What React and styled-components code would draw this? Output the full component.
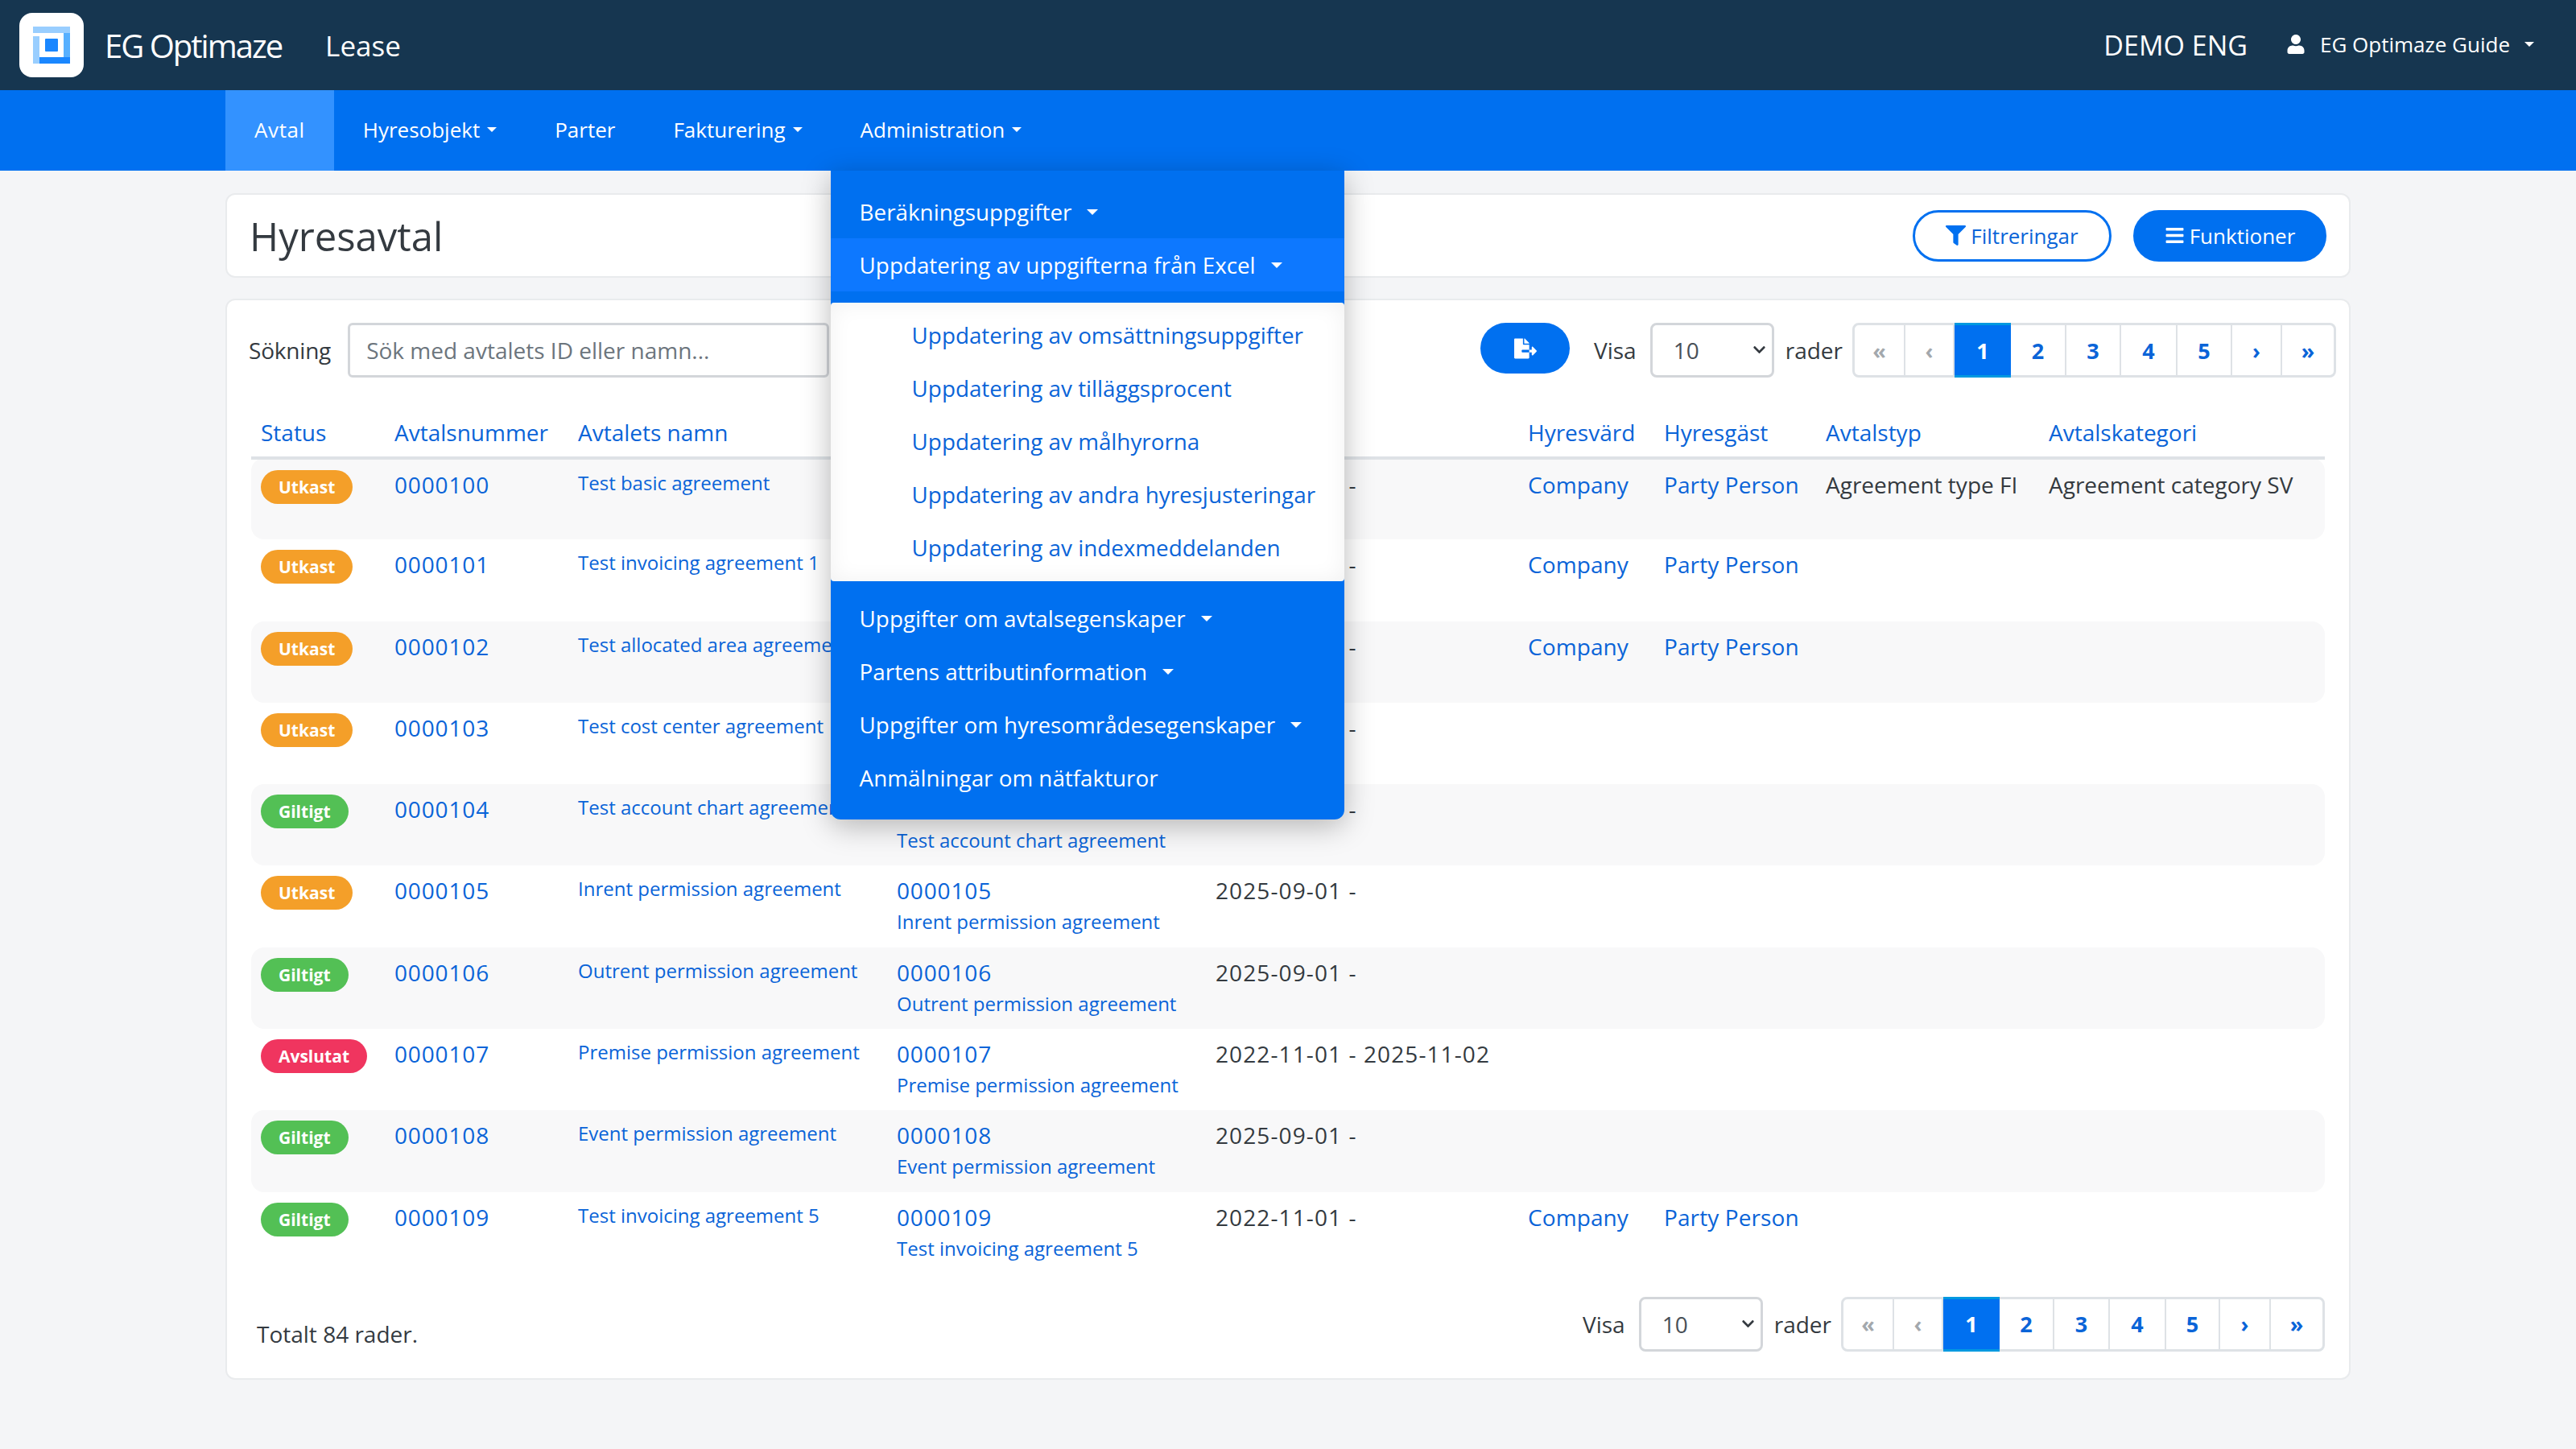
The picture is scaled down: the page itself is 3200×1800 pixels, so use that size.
import React from 'react';
import styled, { createGlobalStyle } from 'styled-components';
import { FaUser, FaFilter, FaBars, FaFileExport, FaChevronDown } from 'react-icons/fa';

const GlobalStyle = createGlobalStyle`
  html, body {
    margin: 0;
    padding: 0;
    background: #f4f5f7;
    font-family: "Open Sans", "Liberation Sans", sans-serif;
    font-size: 28px;
    color: #343a40;
  }
  * { box-sizing: border-box; }
`;

const rows = [
  { status: 'Utkast', name: 'Test basic agreement', date: '2025-09-01 -', lord: true, tenant: true, type: 'Agreement type FI', cat: 'Agreement category SV' },
  { status: 'Utkast', name: 'Test invoicing agreement 1', date: '2025-09-01 -', lord: true, tenant: true },
  { status: 'Utkast', name: 'Test allocated area agreement', date: '2025-09-01 -', lord: true, tenant: true },
  { status: 'Utkast', name: 'Test cost center agreement', date: '2025-09-01 -' },
  { status: 'Giltigt', name: 'Test account chart agreement', date: '2025-09-01 -' },
  { status: 'Utkast', name: 'Inrent permission agreement', date: '2025-09-01 -' },
  { status: 'Giltigt', name: 'Outrent permission agreement', date: '2025-09-01 -' },
  { status: 'Avslutat', name: 'Premise permission agreement', date: '2022-11-01 - 2025-11-02' },
  { status: 'Giltigt', name: 'Event permission agreement', date: '2025-09-01 -' },
  { status: 'Giltigt', name: 'Test invoicing agreement 5', date: '2022-11-01 -', lord: true, tenant: true },
];

const columns = [
  ['Status', 166],
  ['Avtalsnummer', 228],
  ['Avtalets namn', 396],
  ['', 396],
  ['', 388],
  ['Hyresvärd', 169],
  ['Hyresgäst', 201],
  ['Avtalstyp', 277],
  ['Avtalskategori', 355],
];

const pagesTop = [63, 61, 70, 69, 68, 70, 68, 62, 64];
const pagesBottom = [63, 61, 70, 68, 69, 70, 67, 63, 64];
const pageLabels = ['«', '‹', '1', '2', '3', '4', '5', '›', '»'];

const menuTop = ['Beräkningsuppgifter', 'Uppdatering av uppgifterna från Excel'];
const subMenu = [
  'Uppdatering av omsättningsuppgifter',
  'Uppdatering av tilläggsprocent',
  'Uppdatering av målhyrorna',
  'Uppdatering av andra hyresjusteringar',
  'Uppdatering av indexmeddelanden',
];
const menuBottom = [
  ['Uppgifter om avtalsegenskaper', true],
  ['Partens attributinformation', true],
  ['Uppgifter om hyresområdesegenskaper', true],
  ['Anmälningar om nätfakturor', false],
];

const Pager = ({ widths }) => (
  <Pagination>
    {pageLabels.map((label, i) => (
      <PageCell key={label} $w={widths[i]} $active={i === 2} $disabled={i < 2}>
        {label}
      </PageCell>
    ))}
  </Pagination>
);

const RowsSelect = () => (
  <ShowGroup>
    <span>Visa</span>
    <SelectWrap>
      <Select defaultValue="10">
        <option value="10">10</option>
        <option value="25">25</option>
      </Select>
      <SelectArrow><FaChevronDown size={17} /></SelectArrow>
    </SelectWrap>
    <span>rader</span>
  </ShowGroup>
);

const App = () => {
  return (
    <Page>
      <GlobalStyle />
      <Header>
        <Brand>
          <LogoBox>
            <svg width="80" height="80" viewBox="0 0 80 80">
              <rect x="17" y="17" width="46" height="8" fill="#99ceff" />
              <rect x="17" y="29" width="8" height="34" fill="#99ceff" />
              <rect x="55" y="25" width="8" height="30" fill="#57b0ff" />
              <rect x="25" y="55" width="38" height="8" fill="#1a87ff" />
              <rect x="32" y="32" width="16" height="16" rx="1" fill="#1a87ff" />
            </svg>
          </LogoBox>
          <BrandName>EG Optimaze</BrandName>
          <Product>Lease</Product>
        </Brand>
        <HeaderRight>
          <Tenant>DEMO ENG</Tenant>
          <UserMenu>
            <FaUser size={24} />
            <span>EG Optimaze Guide</span>
            <Caret $size={6} />
          </UserMenu>
        </HeaderRight>
      </Header>

      <Nav>
        <NavItem $active>Avtal</NavItem>
        <NavItem>Hyresobjekt<Caret $size={6} /></NavItem>
        <NavItem>Parter</NavItem>
        <NavItem>Fakturering<Caret $size={6} /></NavItem>
        <NavMenuWrap>
          <NavItem>Administration<Caret $size={6} /></NavItem>
          <Dropdown>
            <DropdownGroup>
              {menuTop.map((m, i) => (
                <DropItem key={m} $active={i === 1}>{m}<Caret $size={7} $gap={19} /></DropItem>
              ))}
            </DropdownGroup>
            <SubMenu>
              {subMenu.map((m) => (
                <SubItem key={m}>{m}</SubItem>
              ))}
            </SubMenu>
            <DropdownGroup $bottom>
              {menuBottom.map(([m, caret]) => (
                <DropItem key={m}>{m}{caret && <Caret $size={7} $gap={19} />}</DropItem>
              ))}
            </DropdownGroup>
          </Dropdown>
        </NavMenuWrap>
      </Nav>

      <Main>
        <TitleCard>
          <Title>Hyresavtal</Title>
          <TitleActions>
            <PillButton $w={247}><FaFilter size={25} />Filtreringar</PillButton>
            <PillButton $w={240} $solid><FaBars size={25} />Funktioner</PillButton>
          </TitleActions>
        </TitleCard>

        <ListCard>
          <Toolbar>
            <SearchGroup>
              <span>Sökning</span>
              <SearchInput placeholder="Sök med avtalets ID eller namn..." />
            </SearchGroup>
            <ToolbarRight>
              <ExportButton><FaFileExport size={28} /></ExportButton>
              <RowsSelect />
              <Pager widths={pagesTop} />
            </ToolbarRight>
          </Toolbar>

          <Table>
            <colgroup>
              {columns.map(([label, w], i) => (
                <Col key={i} $w={w} />
              ))}
            </colgroup>
            <thead>
              <tr>
                {columns.map(([label], i) => (
                  <Th key={i}>{label}</Th>
                ))}
              </tr>
            </thead>
            <tbody>
              {rows.map((r, i) => {
                const id = String(100 + i).padStart(7, '0');
                return (
                  <Tr key={id} $striped={i % 2 === 0}>
                    <Td><Badge $status={r.status}>{r.status}</Badge></Td>
                    <Td><Link $num>{id}</Link></Td>
                    <Td><SmallLink>{r.name}</SmallLink></Td>
                    <Td>
                      <Link $num>{id}</Link>
                      <SubLine>{r.name}</SubLine>
                    </Td>
                    <DateCell>{r.date}</DateCell>
                    <Td>{r.lord && <Link>Company</Link>}</Td>
                    <Td>{r.tenant && <Link>Party Person</Link>}</Td>
                    <Td>{r.type}</Td>
                    <Td>{r.cat}</Td>
                  </Tr>
                );
              })}
            </tbody>
          </Table>

          <Footer>
            <Total>Totalt 84 rader.</Total>
            <FooterRight>
              <RowsSelect />
              <Pager widths={pagesBottom} />
            </FooterRight>
          </Footer>
        </ListCard>
      </Main>
    </Page>
  );
};

export default App;

const Page = styled.div`
  width: 3200px;
  height: 1800px;
  overflow: hidden;
`;

const Header = styled.header`
  height: 112px;
  background: #163650;
  color: #fff;
  display: flex;
  align-items: center;
  justify-content: space-between;
  padding: 0 52px 0 24px;
`;

const Brand = styled.div`
  display: flex;
  align-items: center;
`;

const LogoBox = styled.div`
  width: 80px;
  height: 80px;
  background: #fff;
  border-radius: 16px;
  margin-right: 26px;
`;

const BrandName = styled.div`
  font-size: 40px;
  font-weight: 500;
  letter-spacing: -2px;
  margin-right: 54px;
`;

const Product = styled.div`
  font-size: 35px;
`;

const HeaderRight = styled.div`
  display: flex;
  align-items: center;
`;

const Tenant = styled.div`
  font-size: 34px;
  margin-right: 48px;
`;

const UserMenu = styled.div`
  display: flex;
  align-items: center;
  font-size: 26px;
  gap: 18px;
  padding-bottom: 2px;
`;

const Caret = styled.i`
  display: inline-block;
  width: 0;
  height: 0;
  margin-left: ${(p) => p.$gap ?? 0}px;
  border-top: ${(p) => p.$size}px solid currentColor;
  border-left: ${(p) => p.$size}px solid transparent;
  border-right: ${(p) => p.$size}px solid transparent;
`;

const Nav = styled.nav`
  height: 100px;
  background: #0070f0;
  color: #fff;
  display: flex;
  padding-left: 280px;
  font-size: 26px;
`;

const NavItem = styled.div`
  height: 100px;
  padding: 0 36px 3px;
  display: flex;
  align-items: center;
  gap: 9px;
  letter-spacing: ${(p) => (p.$active ? '0.6px' : '0')};
  background: ${(p) => (p.$active ? '#3392ff' : 'transparent')};
`;

const NavMenuWrap = styled.div`
  position: relative;
`;

const Dropdown = styled.div`
  position: absolute;
  z-index: 10;
  top: 100px;
  left: -1px;
  width: 638px;
  height: 806px;
  background: #0070f0;
  border-radius: 0 0 12px 12px;
  box-shadow: 0 8px 36px rgba(0, 0, 0, 0.28);
  font-size: 27.8px;
`;

const DropdownGroup = styled.div`
  padding-top: ${(p) => (p.$bottom ? 13 : 18)}px;
`;

const DropItem = styled.div`
  height: 66px;
  padding: 0 36px;
  display: flex;
  align-items: center;
  background: ${(p) => (p.$active ? '#0d78ff' : 'transparent')};
`;

const SubMenu = styled.div`
  margin-top: 14px;
  height: 346px;
  padding-top: 7px;
  background: #fff;
  border-radius: 4px;
  box-shadow: inset 0 0 28px rgba(0, 0, 0, 0.06);
`;

const SubItem = styled.div`
  height: 66px;
  padding-left: 101px;
  display: flex;
  align-items: center;
  color: #0a64d8;
  white-space: nowrap;
`;

const Main = styled.main`
  padding: 28px 280px 0;
`;

const Card = styled.section`
  background: #fff;
  border: 2px solid #e9ebed;
  border-radius: 12px;
`;

const TitleCard = styled(Card)`
  height: 105px;
  display: flex;
  align-items: center;
  justify-content: space-between;
  padding: 0 28px;
`;

const Title = styled.h1`
  margin: 0;
  font-size: 49px;
  font-weight: 400;
`;

const TitleActions = styled.div`
  display: flex;
  gap: 27px;
`;

const PillButton = styled.button`
  width: ${(p) => p.$w}px;
  height: 64px;
  border-radius: 32px;
  border: 3px solid #0070f0;
  background: ${(p) => (p.$solid ? '#0070f0' : '#fff')};
  color: ${(p) => (p.$solid ? '#fff' : '#0a64d8')};
  font: inherit;
  font-size: 26px;
  display: flex;
  align-items: center;
  justify-content: center;
  gap: 6px;
  svg { color: ${(p) => (p.$solid ? '#fff' : '#0070f0')}; }
`;

const ListCard = styled(Card)`
  margin-top: 26px;
  height: 1343px;
  padding: 28px 30px 0;
`;

const Toolbar = styled.div`
  display: flex;
  justify-content: space-between;
  align-items: flex-start;
  height: 68px;
  margin-right: -14px;
`;

const SearchGroup = styled.div`
  display: flex;
  align-items: center;
  height: 68px;
  gap: 21px;
  margin-left: -3px;
  letter-spacing: -0.2px;
`;

const SearchInput = styled.input`
  width: 598px;
  height: 68px;
  padding: 0 20px;
  font: inherit;
  color: #343a40;
  border: 3px solid #d3d6da;
  border-radius: 6px;
  &::placeholder { color: #6c757d; }
`;

const ToolbarRight = styled.div`
  display: flex;
  align-items: flex-start;
`;

const ExportButton = styled.button`
  width: 111px;
  height: 63px;
  border: none;
  border-radius: 32px;
  background: #0070f0;
  color: #fff;
  margin-right: 30px;
  display: flex;
  align-items: center;
  justify-content: center;
`;

const ShowGroup = styled.div`
  display: flex;
  align-items: center;
  height: 68px;
  gap: 14px;
  margin-right: 12px;
`;

const SelectWrap = styled.div`
  position: relative;
  width: 154px;
  height: 68px;
  margin-left: 3px;
`;

const Select = styled.select`
  appearance: none;
  width: 100%;
  height: 100%;
  padding: 0 26px;
  font: inherit;
  color: #495057;
  background: #fff;
  border: 3px solid #d3d6da;
  border-radius: 8px;
`;

const SelectArrow = styled.span`
  position: absolute;
  display: flex;
  right: 10px;
  top: 25px;
  color: #343a40;
  pointer-events: none;
`;

const Pagination = styled.div`
  display: flex;
  height: 68px;
  border: 3px solid #dee2e6;
  border-radius: 8px;
  background: #fff;
`;

const PageCell = styled.div`
  width: ${(p) => p.$w}px;
  margin: ${(p) => (p.$active ? '-3px 0' : '0')};
  display: flex;
  align-items: center;
  justify-content: center;
  font-size: 27px;
  font-weight: 700;
  background: ${(p) => (p.$active ? '#0070f0' : 'transparent')};
  color: ${(p) => (p.$active ? '#fff' : p.$disabled ? '#a3a8ad' : '#0a64d8')};
  border-right: ${(p) => (p.$active ? 'none' : '2px solid #dee2e6')};
  border-top: ${(p) => (p.$active ? '3px solid #0099e0' : 'none')};
  border-bottom: ${(p) => (p.$active ? '3px solid #0099e0' : 'none')};
  &:last-child { border-right: none; }
`;

const Table = styled.table`
  margin-top: 34px;
  width: 2576px;
  table-layout: fixed;
  border-collapse: collapse;
`;

const Col = styled.col`
  width: ${(p) => p.$w}px;
`;

const Th = styled.th`
  height: 66px;
  padding: 4px 12px 0;
  text-align: left;
  font-weight: 500;
  color: #0a64d8;
  border-bottom: 4px solid #dee2e6;
  white-space: nowrap;
`;

const Tr = styled.tr`
  background: ${(p) => (p.$striped ? '#f8f8f9' : 'transparent')};
`;

const Td = styled.td`
  height: 101.3px;
  padding: 12px 12px 0;
  vertical-align: top;
  white-space: nowrap;
  &:first-child { border-radius: 16px 0 0 16px; }
  &:last-child { border-radius: 0 16px 16px 0; }
`;

const DateCell = styled(Td)`
  letter-spacing: 1.1px;
`;

const Link = styled.span`
  color: #0a64d8;
  letter-spacing: ${(p) => (p.$num ? '0.85px' : '0.1px')};
`;

const SmallLink = styled.div`
  color: #0a64d8;
  font-size: 24px;
  line-height: 34px;
`;

const SubLine = styled.div`
  color: #0a64d8;
  font-size: 24px;
  margin-top: 3px;
`;

const badgeColors = {
  Utkast: '#f49f29',
  Giltigt: '#53c055',
  Avslutat: '#f0355f',
};

const Badge = styled.span`
  display: inline-flex;
  align-items: center;
  height: 42px;
  padding: 0 22px;
  border-radius: 21px;
  background: ${(p) => badgeColors[p.$status]};
  color: #fff;
  font-size: 21px;
  font-weight: 700;
`;

const Footer = styled.div`
  display: flex;
  justify-content: space-between;
  align-items: center;
  margin-top: 29px;
`;

const Total = styled.div`
  padding: 24px 0 0 7px;
`;

const FooterRight = styled.div`
  display: flex;
  align-items: center;
`;
